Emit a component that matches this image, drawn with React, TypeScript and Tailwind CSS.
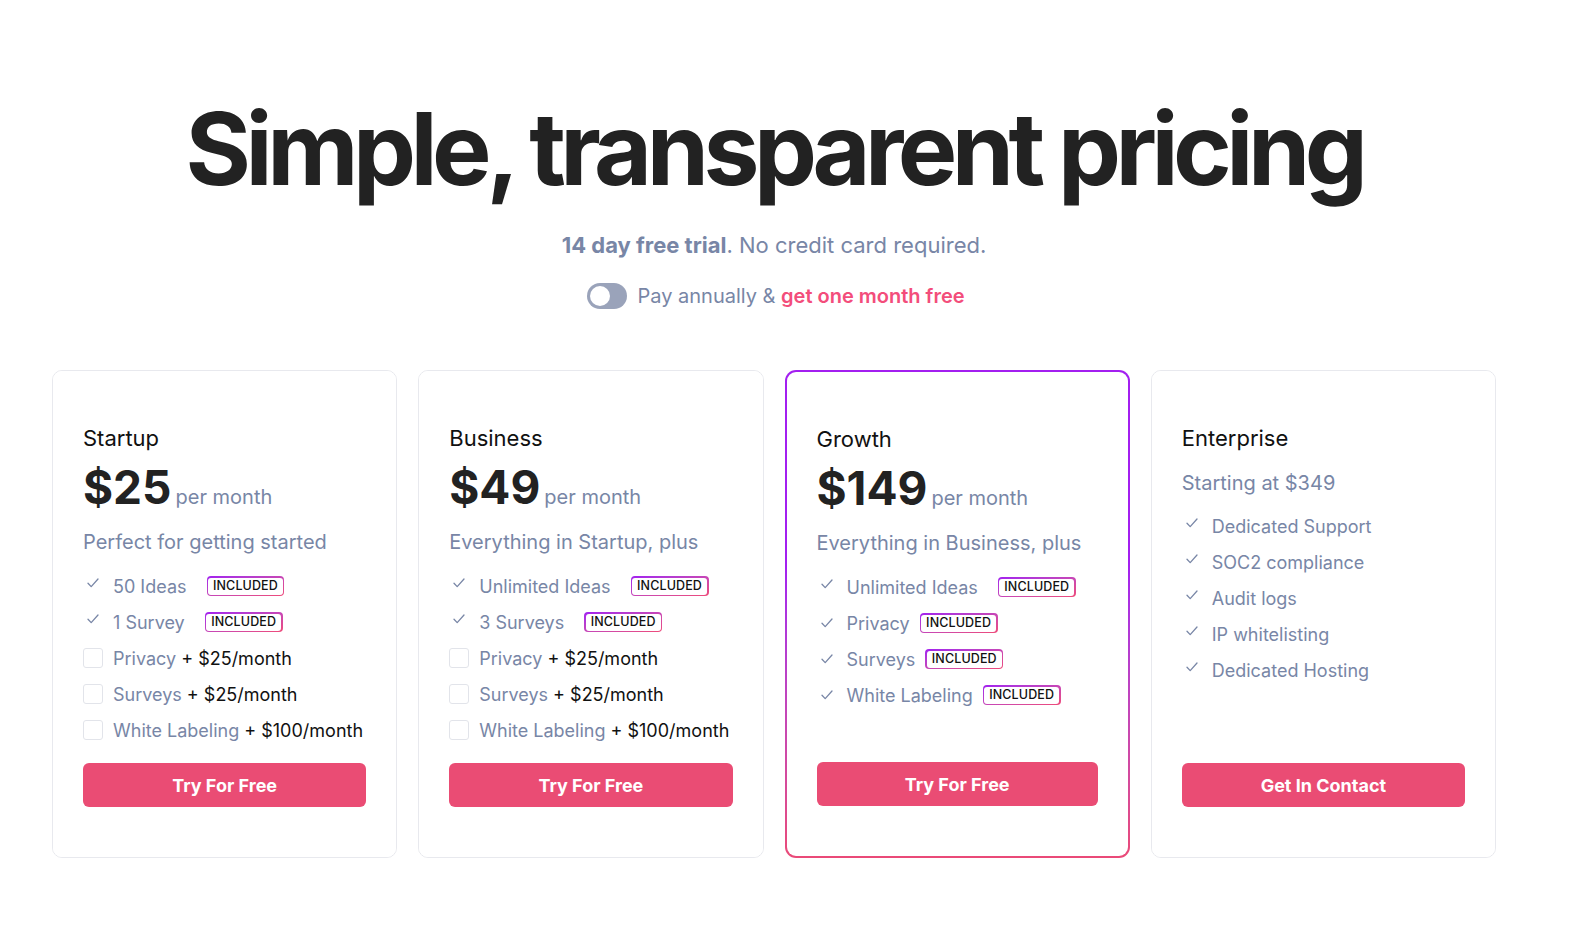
import React from 'react';

type Feature = {
  label: string;
  kind: 'included' | 'addon' | 'check';
  price?: string;
  gap?: 'wide' | 'tight';
  centered?: boolean;
};

type Plan = {
  name: string;
  price?: string;
  subtitle: string;
  features: Feature[];
  cta: string;
  featured?: boolean;
};

const plans: Plan[] = [
  {
    name: 'Startup',
    price: '$25',
    subtitle: 'Perfect for getting started',
    cta: 'Try For Free',
    features: [
      { label: '50 Ideas', kind: 'included', gap: 'wide' },
      { label: '1 Survey', kind: 'included', gap: 'wide' },
      { label: 'Privacy', kind: 'addon', price: '$25/month' },
      { label: 'Surveys', kind: 'addon', price: '$25/month' },
      { label: 'White Labeling', kind: 'addon', price: '$100/month' },
    ],
  },
  {
    name: 'Business',
    price: '$49',
    subtitle: 'Everything in Startup, plus',
    cta: 'Try For Free',
    features: [
      { label: 'Unlimited Ideas', kind: 'included', gap: 'wide' },
      { label: '3 Surveys', kind: 'included', gap: 'wide' },
      { label: 'Privacy', kind: 'addon', price: '$25/month' },
      { label: 'Surveys', kind: 'addon', price: '$25/month' },
      { label: 'White Labeling', kind: 'addon', price: '$100/month' },
    ],
  },
  {
    name: 'Growth',
    price: '$149',
    subtitle: 'Everything in Business, plus',
    cta: 'Try For Free',
    featured: true,
    features: [
      { label: 'Unlimited Ideas', kind: 'included', gap: 'wide' },
      { label: 'Privacy', kind: 'included', gap: 'tight', centered: true },
      { label: 'Surveys', kind: 'included', gap: 'tight', centered: true },
      { label: 'White Labeling', kind: 'included', gap: 'tight', centered: true },
    ],
  },
  {
    name: 'Enterprise',
    subtitle: 'Starting at $349',
    cta: 'Get In Contact',
    features: [
      { label: 'Dedicated Support', kind: 'check' },
      { label: 'SOC2 compliance', kind: 'check' },
      { label: 'Audit logs', kind: 'check' },
      { label: 'IP whitelisting', kind: 'check' },
      { label: 'Dedicated Hosting', kind: 'check' },
    ],
  },
];

const Check = ({ centered }: { centered?: boolean }) => (
  <span className={`flex h-5 w-5 shrink-0 items-center justify-center ${centered ? '' : '-mt-[7px]'}`}>
    <svg width="12" height="10" viewBox="0 0 12 10" fill="none">
      <path d="M1 5.2 L4.2 8.6 L11 1" stroke="#7886a6" strokeWidth="1.3" strokeLinecap="round" strokeLinejoin="round" />
    </svg>
  </span>
);

const Badge = ({ gap }: { gap?: 'wide' | 'tight' }) => (
  <span
    className={`inline-flex rounded-[4px] bg-linear-to-br from-[#a21cf0] to-[#ef4a78] p-[1.5px] ${
      gap === 'tight' ? 'ml-[10px]' : 'ml-[20px]'
    }`}
  >
    <span className="flex h-[17px] items-center rounded-[3px] bg-white px-[5px] text-[12.5px] font-medium leading-none tracking-[0.01em] text-[#111]">
      INCLUDED
    </span>
  </span>
);

const FeatureRow = ({ f }: { f: Feature }) => (
  <li className="flex h-9 items-center gap-[10px] text-[18px] text-[#7886a6]">
    {f.kind === 'addon' ? (
      <span className="h-5 w-5 shrink-0 rounded-[3px] border border-[#e2e4ea] bg-white" />
    ) : (
      <Check centered={f.centered} />
    )}
    <span className="flex items-center">
      <span>{f.label}</span>
      {f.kind === 'addon' && <span className="whitespace-pre text-[#111]"> + {f.price}</span>}
      {f.kind === 'included' && <Badge gap={f.gap} />}
    </span>
  </li>
);

const PlanCard = ({ plan }: { plan: Plan }) => {
  const body = (
    <div className="flex h-full flex-col rounded-[9px] bg-white px-[30px] pt-[53px] pb-[50px]">
      <h3 className="text-[22px] leading-[28px] font-normal text-[#111]">{plan.name}</h3>
      {plan.price ? (
        <>
          <div className="mt-[13px] flex items-baseline">
            <span className="text-[46px] leading-[44px] font-bold text-[#222]">{plan.price}</span>
            <span className="ml-[4px] text-[20px] text-[#7886a6]">per month</span>
          </div>
          <p className="mt-[16px] text-[20px] leading-[28px] text-[#7886a6]">{plan.subtitle}</p>
          <ul className="mt-[12px] flex flex-col">
            {plan.features.map((f) => (
              <FeatureRow key={f.label} f={f} />
            ))}
          </ul>
        </>
      ) : (
        <>
          <p className="mt-[17px] text-[20px] leading-[28px] text-[#7886a6]">{plan.subtitle}</p>
          <ul className="mt-[11px] flex flex-col">
            {plan.features.map((f) => (
              <FeatureRow key={f.label} f={f} />
            ))}
          </ul>
        </>
      )}
      <div className="mt-auto pt-[15px]">
        <button className="h-[44px] w-full rounded-[6px] bg-[#ea4c74] text-[18px] font-bold text-white">
          {plan.cta}
        </button>
      </div>
    </div>
  );

  if (plan.featured) {
    return <div className="rounded-[11px] bg-linear-to-b from-[#a31ff0] from-40% to-[#ea4a78] p-[2px]">{body}</div>;
  }
  return <div className="rounded-[10px] border border-[#e8e9ee]">{body}</div>;
};

export default function App() {
  return (
    <div className="min-h-screen bg-white font-['Inter',sans-serif]">
      <div className="w-[1548px] pt-[99px] pb-[80px]">
        <h1 className="text-center text-[100px] leading-none font-bold tracking-[-0.055em] text-[#222]">
          Simple, transparent pricing
        </h1>
        <p className="mt-[31px] text-center text-[22px] leading-[30px] text-[#7886a6]">
          <span className="font-bold">14 day free trial</span>. No credit card required.
        </p>
        <div className="mt-[21px] flex items-center justify-center gap-[10px] pl-[4px]">
          <span className="flex h-[26px] w-[40px] items-center rounded-full bg-[#9aa3ba] p-[3px]">
            <span className="h-5 w-5 rounded-full bg-white" />
          </span>
          <span className="text-[20px] text-[#7886a6]">
            Pay annually & <span className="font-semibold text-[#f34d7b]">get one month free</span>
          </span>
        </div>
        <div className="mt-[59px] grid grid-cols-4 gap-[21px] px-[52px]">
          {plans.map((p) => (
            <PlanCard key={p.name} plan={p} />
          ))}
        </div>
      </div>
    </div>
  );
}
